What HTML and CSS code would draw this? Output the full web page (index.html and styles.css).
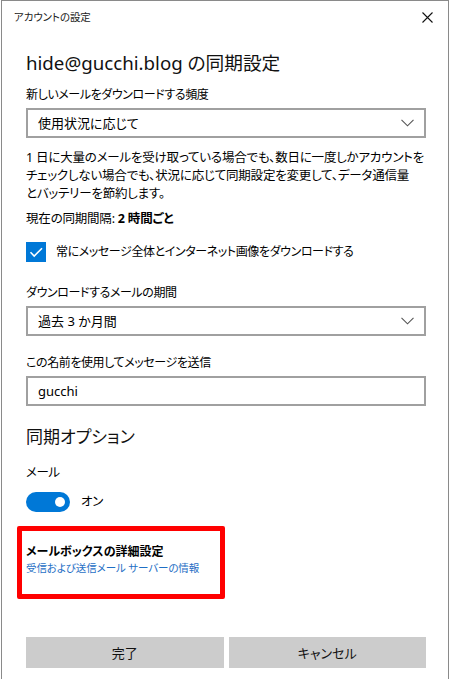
FILE: index.html
```html
<!DOCTYPE html>
<html lang="ja">
<head>
    <meta charset="UTF-8">
    <meta name="viewport" content="width=device-width, initial-scale=1.0">
    <title>アカウントの設定</title>
    <link rel="stylesheet" href="styles.css">
</head>
<body>
    <div class="dialog">
        <div class="titlebar">
            <span class="title">アカウントの設定</span>
            <svg class="close" width="11" height="11" viewBox="0 0 11 11">
                <path d="M0.5 0.5 L10.5 10.5 M10.5 0.5 L0.5 10.5" stroke="#111" stroke-width="1.1" fill="none"/>
            </svg>
        </div>
        <div class="content">
            <h1>hide@gucchi.blog の同期設定</h1>

            <label class="field-label">新しいメールをダウンロードする頻度</label>
            <div class="select">
                <span>使用状況に応じて</span>
                <svg width="13" height="8" viewBox="0 0 13 8"><path d="M0.5 0.8 L6.5 6.8 L12.5 0.8" stroke="#555" stroke-width="1.1" fill="none"/></svg>
            </div>

            <p class="note">1 日に大量のメールを受け取っている場合でも、数日に一度しかアカウントを<br>チェックしない場合でも、状況に応じて同期設定を変更して、データ通信量<br>とバッテリーを節約します。</p>
            <p class="interval">現在の同期間隔: <b>2 時間ごと</b></p>

            <div class="checkbox-row">
                <span class="checkbox">
                    <svg width="20" height="20" viewBox="0 0 20 20"><path d="M4.5 10.2 L8.2 14 L16 6.2" stroke="#fff" stroke-width="1.6" fill="none"/></svg>
                </span>
                <span>常にメッセージ全体とインターネット画像をダウンロードする</span>
            </div>

            <label class="field-label gap-lg">ダウンロードするメールの期間</label>
            <div class="select">
                <span>過去 3 か月間</span>
                <svg width="13" height="8" viewBox="0 0 13 8"><path d="M0.5 0.8 L6.5 6.8 L12.5 0.8" stroke="#555" stroke-width="1.1" fill="none"/></svg>
            </div>

            <label class="field-label gap-md">この名前を使用してメッセージを送信</label>
            <div class="textbox">gucchi</div>

            <h2>同期オプション</h2>

            <div class="option-label">メール</div>
            <div class="toggle-row">
                <span class="toggle"><span class="knob"></span></span>
                <span>オン</span>
            </div>

            <div class="highlight">
                <div class="advanced-title">メールボックスの詳細設定</div>
                <div class="advanced-link">受信および送信メール サーバーの情報</div>
            </div>

            <div class="button-container">
                <button>完了</button>
                <button>キャンセル</button>
            </div>
        </div>
    </div>
</body>
</html>
```

FILE: styles.css
```css
html, body {
    margin: 0;
    padding: 0;
    background-color: #ffffff;
}

body {
    font-family: "Noto Sans", "Noto Sans CJK JP", sans-serif;
    font-feature-settings: "palt";
    color: #000000;
    font-size: 12px;
    letter-spacing: -0.4px;
    line-height: 18px;
}

.dialog {
    width: 446px;
    height: 700px;
    margin-left: 1px;
    border: 1px solid #8a8a8a;
    border-bottom: none;
    background-color: #ffffff;
}

.titlebar {
    height: 31px;
    display: flex;
    align-items: center;
    justify-content: space-between;
    padding: 0 15px 0 12px;
}

.title {
    font-size: 10.5px;
    letter-spacing: -0.1px;
    color: #222222;
}

.close {
    margin-top: 1px;
}

.content {
    padding: 0 22px 0 24px;
}

h1 {
    font-size: 18.7px;
    font-weight: normal;
    letter-spacing: 0;
    line-height: 28px;
    margin: 17px 0 0;
    color: #111111;
}

.field-label {
    display: block;
    margin-top: 9px;
}

.gap-lg {
    margin-top: 22px;
}

.gap-md {
    margin-top: 18px;
}

.select,
.textbox {
    box-sizing: border-box;
    height: 30px;
    margin-top: 4px;
    border: 2px solid #a0a0a0;
    padding: 0 10px 0 10px;
    display: flex;
    align-items: center;
    justify-content: space-between;
    font-size: 13px;
    letter-spacing: 0;
}

.note {
    margin: 11px 0 0;
    font-size: 12.5px;
    letter-spacing: -0.2px;
    white-space: nowrap;
}

.interval {
    margin: 7px 0 0;
    font-size: 12.5px;
    letter-spacing: -0.2px;
}

.interval b {
    font-weight: bold;
}

.checkbox-row {
    display: flex;
    align-items: center;
    gap: 10px;
    margin-top: 14px;
    height: 20px;
}

.checkbox {
    width: 20px;
    height: 20px;
    background-color: #0078d7;
    display: inline-block;
}

.checkbox svg {
    display: block;
}

h2 {
    font-size: 17px;
    font-weight: normal;
    letter-spacing: 0;
    line-height: 26px;
    margin: 18px 0 0;
    color: #111111;
}

.option-label {
    margin-top: 14px;
    font-size: 12.5px;
}

.toggle-row {
    display: flex;
    align-items: center;
    gap: 11px;
    margin-top: 10px;
    height: 20px;
    font-size: 12.5px;
}

.toggle {
    width: 44px;
    height: 20px;
    border-radius: 10px;
    background-color: #0078d7;
    display: flex;
    align-items: center;
    justify-content: flex-end;
    padding-right: 5px;
    box-sizing: border-box;
}

.knob {
    width: 10px;
    height: 10px;
    border-radius: 50%;
    background-color: #ffffff;
}

.highlight {
    width: 208px;
    box-sizing: border-box;
    margin: 14px 0 0 -9px;
    border: 5px solid #ff0000;
    border-radius: 2px;
    padding: 13px 0 18px 4px;
}

.advanced-title {
    font-weight: bold;
    line-height: 16px;
    letter-spacing: 0;
}

.advanced-link {
    color: #1f6fc5;
    font-size: 10.5px;
    letter-spacing: -0.1px;
    line-height: 16px;
    white-space: nowrap;
}

.button-container {
    display: grid;
    grid-template-columns: 1fr 1fr;
    gap: 5px;
    margin-top: 38px;
}

button {
    height: 31px;
    border: none;
    background-color: #cccccc;
    font-family: inherit;
    font-feature-settings: "palt";
    font-size: 13px;
    letter-spacing: 0;
    color: #111111;
    padding: 0;
}
```
